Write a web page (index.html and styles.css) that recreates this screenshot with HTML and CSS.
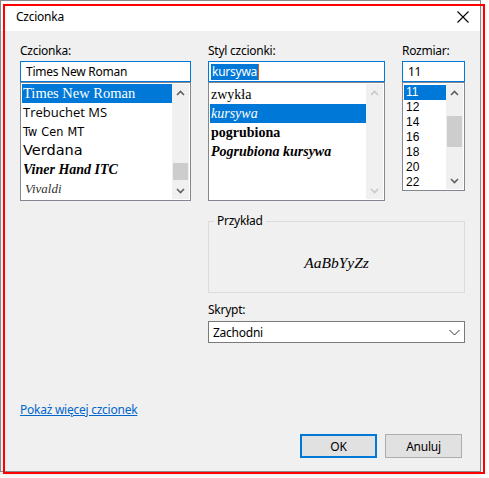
FILE: index.html
```html
<!DOCTYPE html>
<html lang="pl">
<head>
<meta charset="utf-8">
<title>Czcionka</title>
<link rel="stylesheet" href="styles.css">
</head>
<body>
<div class="window">
  <div class="titlebar">
    <span class="title">Czcionka</span>
    <svg class="close" width="12" height="12" viewBox="0 0 12 12"><path d="M0.5 0.5 L11.5 11.5 M11.5 0.5 L0.5 11.5" stroke="#000" stroke-width="1.1" fill="none"/></svg>
  </div>
  <div class="client">
    <div class="topgrid">
      <div class="col">
        <div class="label">Czcionka:</div>
        <div class="edit"><span>Times New Roman</span></div>
        <div class="list list-font">
          <div class="items">
            <div class="item f-times sel">Times New Roman</div>
            <div class="item f-treb">Trebuchet MS</div>
            <div class="item f-twcen">Tw Cen MT</div>
            <div class="item f-verdana">Verdana</div>
            <div class="item f-viner">Viner Hand ITC</div>
            <div class="item f-vivaldi">Vivaldi</div>
          </div>
          <div class="sbar">
            <div class="arrow"><svg width="9" height="6" viewBox="0 0 9 6"><path d="M1 5 L4.5 1.5 L8 5" stroke="#606060" stroke-width="1.6" fill="none"/></svg></div>
            <div class="track"><div class="thumb thumb-font"></div></div>
            <div class="arrow"><svg width="9" height="6" viewBox="0 0 9 6"><path d="M1 1 L4.5 4.5 L8 1" stroke="#606060" stroke-width="1.6" fill="none"/></svg></div>
          </div>
        </div>
      </div>
      <div class="col">
        <div class="label">Styl czcionki:</div>
        <div class="edit"><span class="selected-text">kursywa</span><span class="caret"></span></div>
        <div class="list list-style">
          <div class="items">
            <div class="item s-item">zwykła</div>
            <div class="item s-item s-italic sel">kursywa</div>
            <div class="item s-item s-bold">pogrubiona</div>
            <div class="item s-item s-bolditalic">Pogrubiona kursywa</div>
          </div>
          <div class="sbar">
            <div class="arrow"><svg width="9" height="6" viewBox="0 0 9 6"><path d="M1 5 L4.5 1.5 L8 5" stroke="#c8c8c8" stroke-width="1.6" fill="none"/></svg></div>
            <div class="track"></div>
            <div class="arrow"><svg width="9" height="6" viewBox="0 0 9 6"><path d="M1 1 L4.5 4.5 L8 1" stroke="#c8c8c8" stroke-width="1.6" fill="none"/></svg></div>
          </div>
        </div>
      </div>
      <div class="col">
        <div class="label">Rozmiar:</div>
        <div class="edit"><span>11</span></div>
        <div class="list list-size">
          <div class="items">
            <div class="item z-item sel">11</div>
            <div class="item z-item">12</div>
            <div class="item z-item">14</div>
            <div class="item z-item">16</div>
            <div class="item z-item">18</div>
            <div class="item z-item">20</div>
            <div class="item z-item">22</div>
          </div>
          <div class="sbar">
            <div class="arrow"><svg width="9" height="6" viewBox="0 0 9 6"><path d="M1 5 L4.5 1.5 L8 5" stroke="#606060" stroke-width="1.6" fill="none"/></svg></div>
            <div class="track"><div class="thumb thumb-size"></div></div>
            <div class="arrow"><svg width="9" height="6" viewBox="0 0 9 6"><path d="M1 1 L4.5 4.5 L8 1" stroke="#606060" stroke-width="1.6" fill="none"/></svg></div>
          </div>
        </div>
      </div>
    </div>
    <div class="lower">
      <fieldset class="group">
        <legend>Przykład</legend>
        <div class="sample">AaBbYyZz</div>
      </fieldset>
      <div class="label script-label">Skrypt:</div>
      <div class="combo">
        <span>Zachodni</span>
        <svg width="11" height="7" viewBox="0 0 11 7"><path d="M0.5 1 L5.5 6 L10.5 1" stroke="#333" stroke-width="1" fill="none"/></svg>
      </div>
    </div>
    <div class="linkrow"><a class="more" href="#">Pokaż więcej czcionek</a></div>
    <div class="buttons">
      <div class="btn btn-default">OK</div>
      <div class="btn">Anuluj</div>
    </div>
  </div>
</div>
<div class="annot"></div>
</body>
</html>
```
FILE: styles.css
```css
html, body {
  margin: 0;
  padding: 0;
  background: #ffffff;
}
body {
  font-family: "Noto Sans", "Liberation Sans", sans-serif;
  font-size: 12px;
  letter-spacing: -0.25px;
  color: #000;
  position: relative;
  width: 489px;
  height: 478px;
  overflow: hidden;
}
.window {
  box-sizing: border-box;
  width: 481px;
  height: 472px;
  border: 1px solid #8a8a8a;
  display: flex;
  flex-direction: column;
  box-shadow: 0 2px 6px rgba(0,0,0,0.12);
}
.titlebar {
  height: 30px;
  background: #ffffff;
  display: flex;
  align-items: center;
  justify-content: space-between;
  padding: 0 11px 0 15px;
}
.title {
  line-height: 16px;
  margin-top: 1px;
}
.close {
  display: block;
  margin-top: 1px;
}
.client {
  flex: 1;
  background: #f0f0f0;
  padding: 12px 15px 0 19px;
  display: flex;
  flex-direction: column;
}
.topgrid {
  display: grid;
  grid-template-columns: 171px 177px 63px;
  column-gap: 17px;
}
.col {
  display: flex;
  flex-direction: column;
}
.label {
  line-height: 16px;
  height: 16px;
}
.edit {
  margin-top: 2px;
  height: 21px;
  box-sizing: border-box;
  border: 1px solid #0078d7;
  background: #fff;
  display: flex;
  align-items: center;
  padding-left: 5px;
  line-height: 16px;
}
.selected-text {
  background: #0078d7;
  color: #fff;
  padding: 0 1px 0 1px;
  margin-left: -3px;
  line-height: 16px;
}
.caret {
  display: inline-block;
  width: 1px;
  height: 16px;
  background: #d06010;
}
.list {
  box-sizing: border-box;
  border: 1px solid #828790;
  background: #fff;
  display: flex;
  padding: 1px;
}
.list-font, .list-style {
  height: 119px;
}
.list-size {
  height: 109px;
}
.items {
  flex: 1;
  min-width: 0;
  overflow: hidden;
}
.item {
  white-space: nowrap;
  overflow: hidden;
  padding-left: 1px;
  letter-spacing: 0;
}
.item.sel {
  background: #0078d7;
  color: #fff;
}
.list-font .item {
  height: 19px;
  line-height: 19px;
}
.f-times { font-family: "Liberation Serif", serif; font-size: 14.5px; }
.f-treb { font-family: "Open Sans", sans-serif; font-size: 13px; }
.f-twcen { font-family: "DejaVu Sans Condensed", "DejaVu Sans", sans-serif; font-size: 12.5px; letter-spacing: 0.2px; }
.f-verdana { font-family: "DejaVu Sans", sans-serif; font-size: 14.5px; }
.f-viner { font-family: "Liberation Serif", serif; font-style: italic; font-weight: bold; font-size: 14px; }
.f-vivaldi { font-family: "Liberation Serif", serif; font-style: italic; font-size: 13px; color: #333; padding-left: 3px; }
.list-style .items {
  padding-top: 1px;
}
.s-item {
  font-family: "Liberation Serif", serif;
  font-size: 14px;
  height: 19px;
  line-height: 19px;
}
.s-italic { font-style: italic; }
.s-bold { font-weight: bold; }
.s-bolditalic { font-weight: bold; font-style: italic; }
.list-size .items {
  padding-top: 1px;
}
.z-item {
  height: 15px;
  line-height: 15px;
  font-family: "Liberation Sans", sans-serif;
  font-size: 12px;
  padding-left: 2px;
}
.sbar {
  width: 17px;
  background: #f0f0f0;
  display: flex;
  flex-direction: column;
}
.arrow {
  height: 17px;
  display: flex;
  align-items: center;
  justify-content: center;
}
.arrow svg { display: block; }
.track {
  flex: 1;
  display: flex;
  flex-direction: column;
  align-items: center;
}
.thumb {
  width: 15px;
  background: #cdcdcd;
}
.thumb-font {
  height: 17px;
  margin-top: 62px;
}
.thumb-size {
  height: 31px;
  margin-top: 15px;
}
.lower {
  margin-left: 188px;
  width: 257px;
  display: flex;
  flex-direction: column;
}
.group {
  margin: 12px 0 0 0;
  padding: 0;
  border: 1px solid #dcdcdc;
  min-width: 0;
}
.group legend {
  margin-left: 5px;
  padding: 0 3px;
  line-height: 16px;
  font-size: 12px;
}
.sample {
  height: 63px;
  box-sizing: border-box;
  padding-top: 24px;
  line-height: 20px;
  text-align: center;
  font-family: "Liberation Serif", serif;
  font-style: italic;
  font-size: 15.5px;
  letter-spacing: 0;
}
.script-label {
  margin-top: 9px;
}
.combo {
  margin-top: 3px;
  height: 22px;
  box-sizing: border-box;
  border: 1px solid #7a7a7a;
  background: #fff;
  display: flex;
  align-items: center;
  justify-content: space-between;
  padding: 0 4px 0 4px;
}
.combo svg { display: block; }
.linkrow {
  margin-top: 59px;
  line-height: 16px;
}
.more {
  color: #0066cc;
  text-decoration: underline;
}
.buttons {
  margin-top: 16px;
  margin-right: 3px;
  display: flex;
  justify-content: flex-end;
  gap: 8px;
}
.btn {
  box-sizing: border-box;
  width: 77px;
  height: 24px;
  background: #e1e1e1;
  border: 1px solid #adadad;
  display: flex;
  align-items: center;
  justify-content: center;
}
.btn-default {
  border: 2px solid #0078d7;
}
.annot {
  position: absolute;
  left: 3px;
  top: 4px;
  width: 482px;
  height: 470px;
  box-sizing: border-box;
  border: 2px solid #ff0000;
  pointer-events: none;
}
```
